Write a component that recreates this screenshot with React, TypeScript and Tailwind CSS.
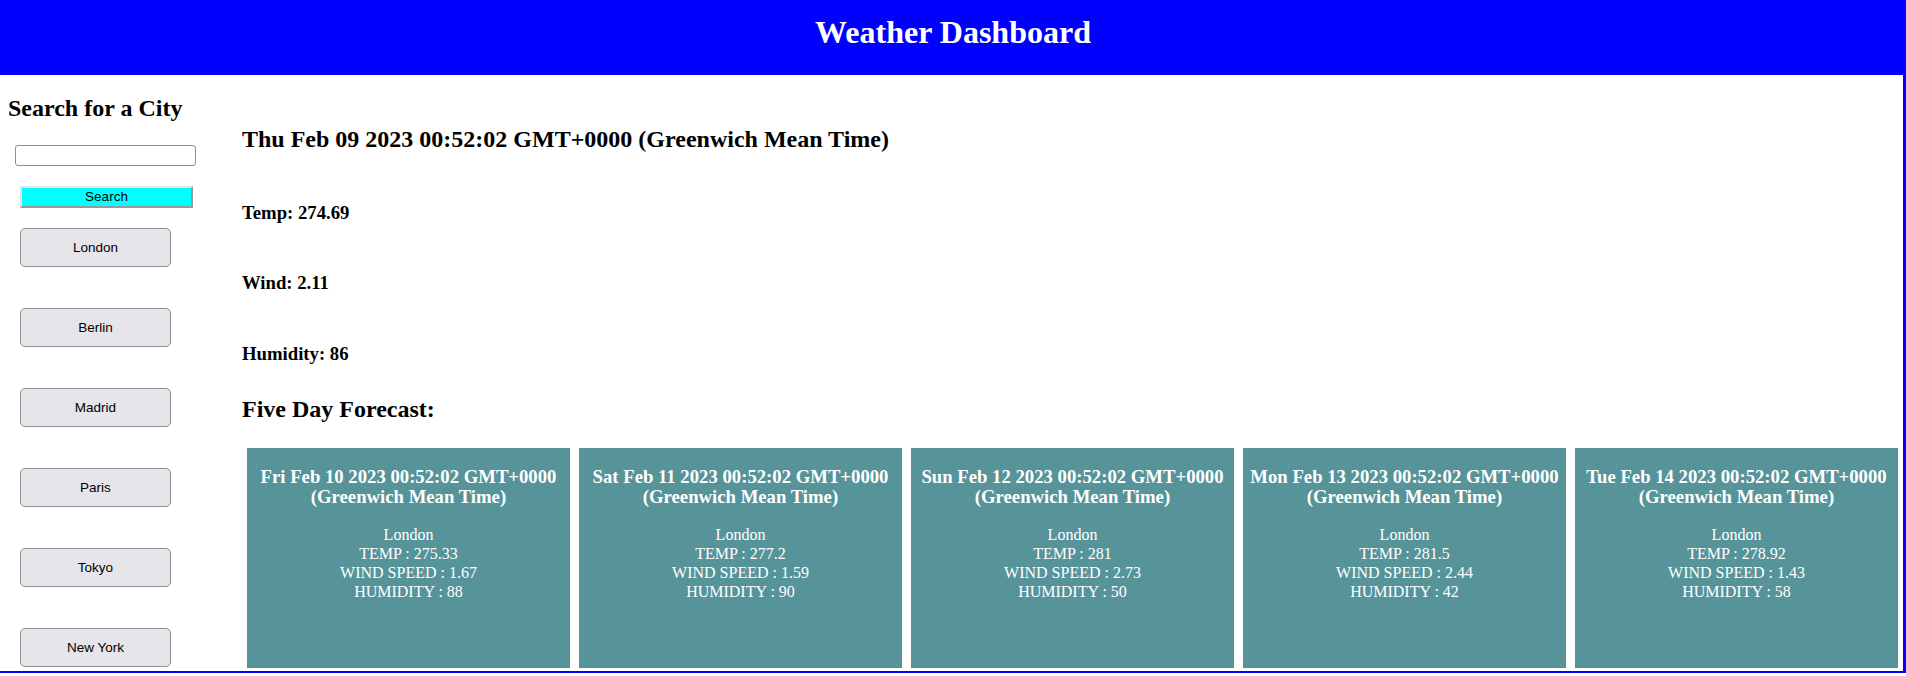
import React from "react";

const cities = ["London", "Berlin", "Madrid", "Paris", "Tokyo", "New York"];

const forecast = [
  { date: "Fri Feb 10 2023 00:52:02 GMT+0000", temp: "275.33", wind: "1.67", hum: "88" },
  { date: "Sat Feb 11 2023 00:52:02 GMT+0000", temp: "277.2", wind: "1.59", hum: "90" },
  { date: "Sun Feb 12 2023 00:52:02 GMT+0000", temp: "281", wind: "2.73", hum: "50" },
  { date: "Mon Feb 13 2023 00:52:02 GMT+0000", temp: "281.5", wind: "2.44", hum: "42" },
  { date: "Tue Feb 14 2023 00:52:02 GMT+0000", temp: "278.92", wind: "1.43", hum: "58" },
];

export default function App() {
  return (
    <div className="w-[1906px] h-[676px] overflow-hidden bg-white text-black font-['Liberation_Serif','Times_New_Roman',serif]">
      <header className="h-[75px] bg-[#0000ff]">
        <h1 className="pt-[14px] text-center text-[32px] leading-[37px] font-bold text-white">
          Weather Dashboard
        </h1>
      </header>
      <div className="flex h-[598px] border-r-[3px] border-b-[2px] border-[#0000ff]">
        <aside className="w-[242px] shrink-0 flex flex-col items-start">
          <h2 className="ml-[8px] mt-[19px] text-[24px] leading-[28px] font-bold">Search for a City</h2>
          <input
            type="text"
            className="ml-[15px] mt-[23px] w-[181px] h-[21px] border border-[#8e8e93] rounded-[3px] bg-white outline-none"
          />
          <button className="ml-[20px] mt-[20px] w-[173px] h-[22px] bg-[#00ffff] border-2 border-t-[#e3e3e3] border-l-[#e3e3e3] border-b-[#9a9a9a] border-r-[#9a9a9a] text-[13.5px] leading-[16px] font-['Liberation_Sans',Arial,sans-serif] text-black">
            Search
          </button>
          <div className="ml-[20px] mt-[20px] flex flex-col gap-[41px]">
            {cities.map((c) => (
              <button
                key={c}
                className="w-[151px] h-[39px] bg-[#e5e5ea] border border-[#8e8e93] rounded-[5px] text-[13.5px] leading-[16px] font-['Liberation_Sans',Arial,sans-serif] text-black"
              >
                {c}
              </button>
            ))}
          </div>
        </aside>
        <main className="flex-1 flex flex-col min-w-0">
          <h2 className="mt-[50px] text-[24px] leading-[28px] font-bold">
            Thu Feb 09 2023 00:52:02 GMT+0000 (Greenwich Mean Time)
          </h2>
          <h3 className="mt-[49px] text-[18.72px] leading-[22px] font-bold">Temp: 274.69</h3>
          <h3 className="mt-[48px] text-[18.72px] leading-[22px] font-bold">Wind: 2.11</h3>
          <h3 className="mt-[49px] text-[18.72px] leading-[22px] font-bold">Humidity: 86</h3>
          <h2 className="mt-[30px] text-[24px] leading-[28px] font-bold">Five Day Forecast:</h2>
          <div className="mt-[25px] flex gap-[9px] px-[5px]">
            {forecast.map((f) => (
              <div key={f.date} className="flex-1 h-[220px] bg-[#56949a] text-white text-center pt-[19px]">
                <h3 className="text-[18.72px] leading-[20px] font-bold">
                  {f.date}
                  <br />
                  (Greenwich Mean Time)
                </h3>
                <div className="mt-[18px] text-[16px] leading-[19px]">
                  <p>London</p>
                  <p>TEMP : {f.temp}</p>
                  <p>WIND SPEED : {f.wind}</p>
                  <p>HUMIDITY : {f.hum}</p>
                </div>
              </div>
            ))}
          </div>
        </main>
      </div>
    </div>
  );
}
